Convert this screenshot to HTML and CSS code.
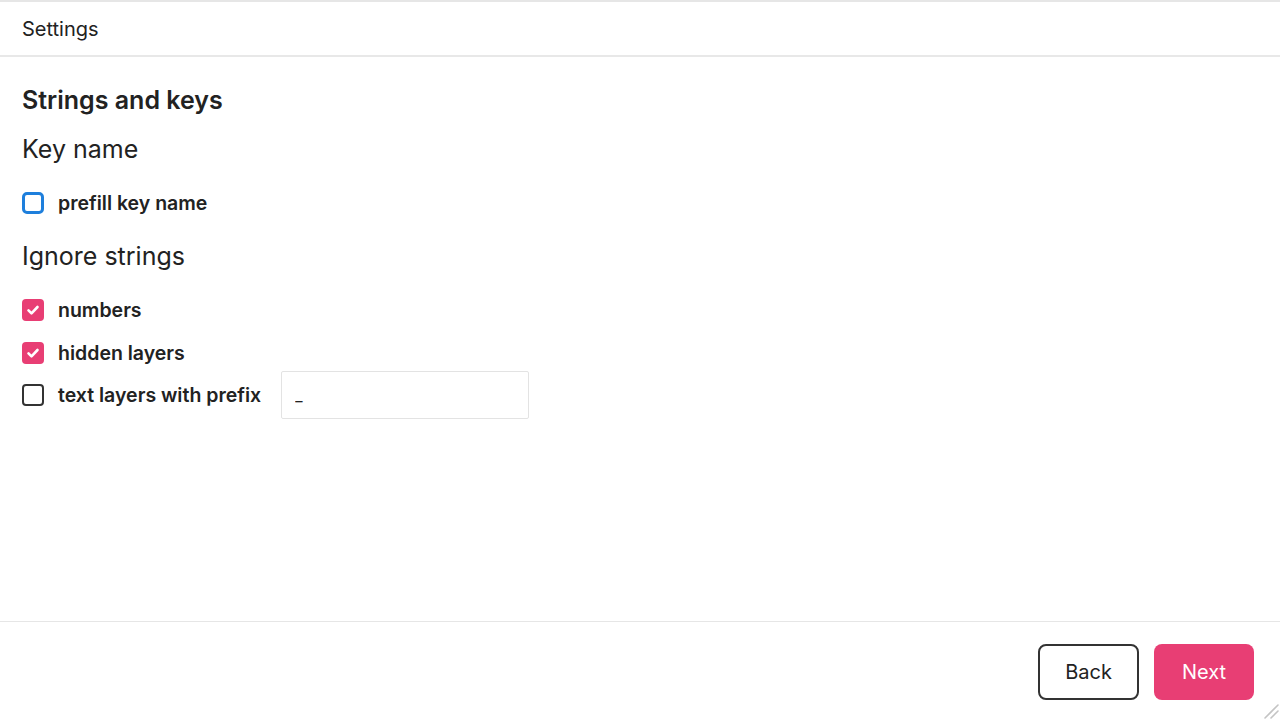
FILE: index.html
```html
<!DOCTYPE html>
<html lang="en">
<head>
    <meta charset="UTF-8">
    <meta name="viewport" content="width=device-width, initial-scale=1.0">
    <title>Settings</title>
    <link rel="stylesheet" href="styles.css">
</head>
<body>
    <div class="header">Settings</div>

    <div class="content">
        <h2 class="section-title">Strings and keys</h2>

        <h3 class="group-title">Key name</h3>
        <label class="option first">
            <span class="box focus"></span>
            <span class="option-text">prefill key name</span>
        </label>

        <h3 class="group-title">Ignore strings</h3>
        <label class="option first">
            <span class="box checked">
                <svg width="16" height="16" viewBox="0 0 16 16"><path d="M3.5 8.3l3 3L12.5 5" fill="none" stroke="#fff" stroke-width="2.6" stroke-linecap="round" stroke-linejoin="round"/></svg>
            </span>
            <span class="option-text">numbers</span>
        </label>
        <label class="option">
            <span class="box checked">
                <svg width="16" height="16" viewBox="0 0 16 16"><path d="M3.5 8.3l3 3L12.5 5" fill="none" stroke="#fff" stroke-width="2.6" stroke-linecap="round" stroke-linejoin="round"/></svg>
            </span>
            <span class="option-text">hidden layers</span>
        </label>
        <label class="option with-input">
            <span class="box"></span>
            <span class="option-text">text layers with prefix</span>
            <input class="prefix-input" type="text" value="_">
        </label>
    </div>

    <div class="footer">
        <button class="back-button">Back</button>
        <button class="next-button">Next</button>
    </div>

    <svg class="resize" width="16" height="16" viewBox="0 0 16 16">
        <path d="M2 15L15 2M8 15L15 8" stroke="#c4c4c4" stroke-width="1.6" stroke-linecap="round"/>
    </svg>
</body>
</html>
```

FILE: styles.css
```css
body {
    margin: 0;
    height: 100vh;
    display: flex;
    flex-direction: column;
    font-family: Inter, "Noto Sans", sans-serif;
    color: #222;
    background-color: #fff;
    border-top: 2px solid #e6e6e6;
    box-sizing: border-box;
    overflow: hidden;
    position: relative;
}
.header {
    height: 53px;
    padding: 0 22px;
    display: flex;
    align-items: center;
    font-size: 20px;
    border-bottom: 2px solid #e8e8e8;
}
.content {
    flex: 1;
    padding: 27px 22px 0;
}
.section-title {
    margin: 0;
    font-size: 25px;
    line-height: 32px;
    font-weight: 600;
}
.group-title {
    margin: 17px 0 0;
    font-size: 25px;
    line-height: 32px;
    font-weight: 400;
}
.option {
    display: flex;
    align-items: center;
    height: 22px;
    margin-top: 21px;
    cursor: pointer;
}
.group-title + .option.first {
    margin-top: 27px;
}
.option + .group-title {
    margin-top: 26px;
}
.option.with-input {
    height: 48px;
    margin-top: 7px;
}
.box {
    width: 22px;
    height: 22px;
    box-sizing: border-box;
    border: 2px solid #333;
    border-radius: 4px;
    display: flex;
    align-items: center;
    justify-content: center;
    flex-shrink: 0;
}
.box.focus {
    border: 3px solid #1e7fdc;
    border-radius: 5px;
}
.box.checked {
    border: none;
    background-color: #e83e74;
}
.option-text {
    margin-left: 14px;
    font-size: 19.5px;
    font-weight: 600;
}
.prefix-input {
    margin-left: 20px;
    width: 248px;
    height: 48px;
    box-sizing: border-box;
    border: 1px solid #e3e3e3;
    border-radius: 2px;
    padding: 0 13px;
    font-family: Inter, "Noto Sans", sans-serif;
    font-size: 16px;
    color: #222;
    outline: none;
}
.footer {
    height: 99px;
    border-top: 1px solid #e6e6e6;
    display: flex;
    justify-content: flex-end;
    align-items: flex-start;
    gap: 15px;
    padding: 22px 26px 0 0;
    box-sizing: border-box;
}
.footer button {
    height: 56px;
    font-family: Inter, "Noto Sans", sans-serif;
    font-size: 20px;
    border-radius: 8px;
    cursor: pointer;
}
.back-button {
    width: 101px;
    background-color: #fff;
    color: #222;
    border: 2px solid #333;
}
.next-button {
    width: 100px;
    background-color: #e83e74;
    color: #fff;
    border: none;
}
.resize {
    position: absolute;
    right: 1px;
    bottom: 1px;
}
```
